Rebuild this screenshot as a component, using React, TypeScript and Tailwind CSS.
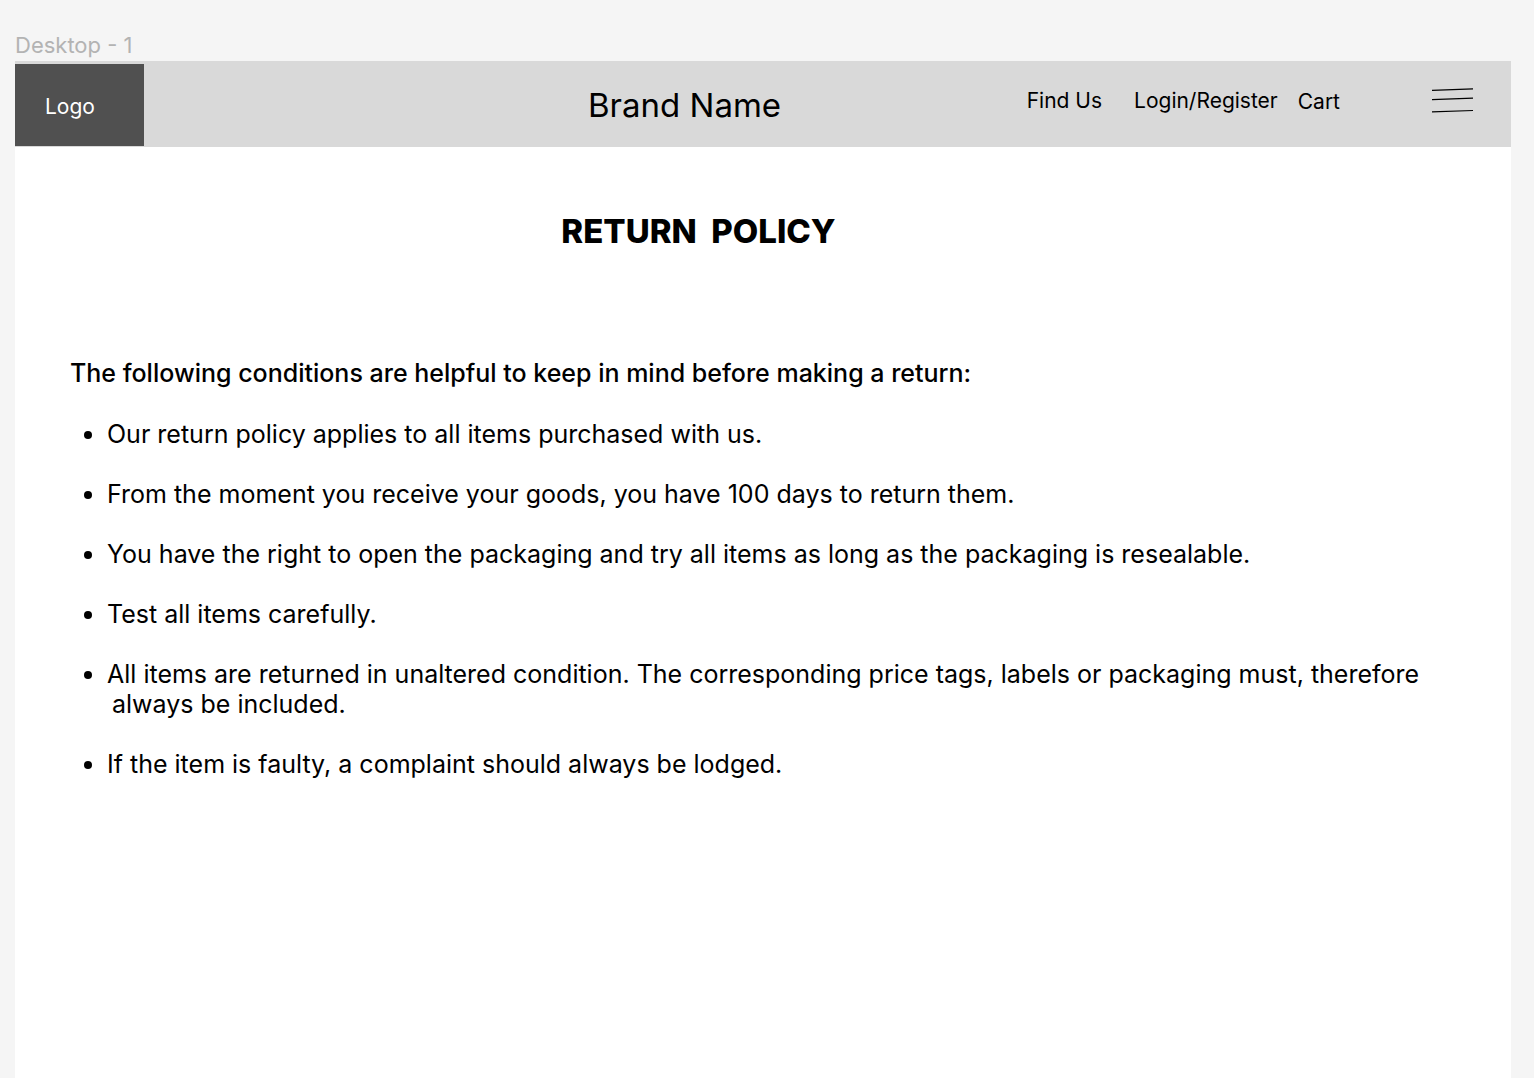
const items = [
  'Our return policy applies to all items purchased with us.',
  'From the moment you receive your goods, you have 100 days to return them.',
  'You have the right to open the packaging and try all items as long as the packaging is resealable.',
  'Test all items carefully.',
  'All items are returned in unaltered condition. The corresponding price tags, labels or packaging must, therefore always be included.',
  'If the item is faulty, a complaint should always be lodged.',
];

export default function App() {
  return (
    <div className="flex min-h-screen flex-col bg-[#f5f5f5] pr-[23px] pl-[15px] font-['Inter',sans-serif] text-black">
      <p className="pt-[30px] text-[22px] leading-[31px] text-[#b3b3b3]">Desktop - 1</p>
      <header className="flex h-[86px] items-center bg-[#d9d9d9]">
        <a href="#" className="mt-[2px] flex h-[82px] w-[129px] items-center bg-[#505050] pt-1 pl-[30px] text-[21px] leading-[26px] text-white">
          Logo
        </a>
        <p className="ml-[444px] pt-[2px] text-[33px] leading-[40px]">Brand Name</p>
        <nav className="ml-auto flex items-center text-[21px] leading-[26px]">
          <a href="#" className="mr-8 -mt-[6px]">Find Us</a>
          <a href="#" className="mr-5 -mt-[6px]">Login/Register</a>
          <a href="#" className="-mt-1">Cart</a>
        </nav>
        <button type="button" aria-label="Menu" className="mr-[37px] ml-[91px] -mt-[6px]">
          <svg width="43" height="26" viewBox="0 0 43 26" fill="none" stroke="black" strokeWidth="1.2">
            <path d="M1 2.400L42 0.800M1 11.600L42 10.200M1 23.900L42 22.500" />
          </svg>
        </button>
      </header>
      <main className="flex-1 bg-white pr-[90px] pl-[55px]">
        <h1 className="pt-[63px] text-center text-[33px] leading-[42px] font-extrabold whitespace-pre pr-[94px]">RETURN  POLICY</h1>
        <h2 className="mt-[106px] text-[25px] leading-[30px] font-medium">
          The following conditions are helpful to keep in mind before making a return:
        </h2>
        <ul className="mt-[31px] flex flex-col gap-[30px] text-[25px] leading-[30px]">
          {items.map((item) => (
            <li key={item} className="flex">
              <span className="mt-3 mr-[15px] ml-[14px] size-2 shrink-0 rounded-full bg-black" />
              <span className="pl-[5px] -indent-[5px]">{item}</span>
            </li>
          ))}
        </ul>
      </main>
    </div>
  );
}
